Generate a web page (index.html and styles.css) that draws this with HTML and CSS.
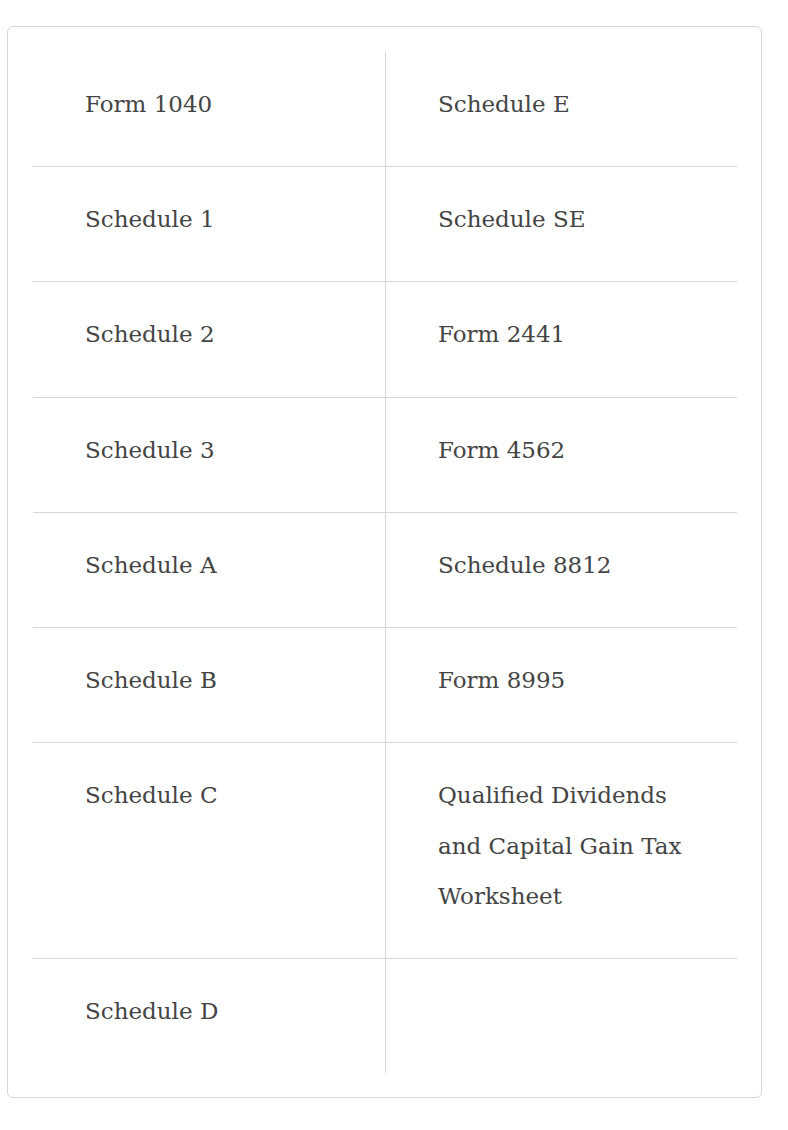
FILE: index.html
```html
<!DOCTYPE html>
<html>
<head>
<meta charset="utf-8">
<link rel="stylesheet" href="styles.css">
</head>
<body>
<div class="card">
  <div class="grid">
    <div class="cell left">Form 1040</div>
    <div class="cell">Schedule E</div>
    <div class="cell left">Schedule 1</div>
    <div class="cell">Schedule SE</div>
    <div class="cell left">Schedule 2</div>
    <div class="cell">Form 2441</div>
    <div class="cell left">Schedule 3</div>
    <div class="cell">Form 4562</div>
    <div class="cell left">Schedule A</div>
    <div class="cell">Schedule 8812</div>
    <div class="cell left">Schedule B</div>
    <div class="cell">Form 8995</div>
    <div class="cell left">Schedule C</div>
    <div class="cell">Qualified Dividends and Capital Gain Tax Worksheet</div>
    <div class="cell left last">Schedule D</div>
    <div class="cell last"></div>
  </div>
</div>
</body>
</html>
```

FILE: styles.css
```css
html, body {
  margin: 0;
  padding: 0;
  background: #ffffff;
}
body {
  padding: 26px 26px 0 7px;
  font-family: "DejaVu Serif", "Liberation Serif", serif;
  color: #444444;
}
.card {
  width: 755px;
  box-sizing: border-box;
  border: 1px solid #d6d6d6;
  border-radius: 6px;
  padding: 25px 25px 24px 25px;
}
.grid {
  display: grid;
  grid-template-columns: 353px 351px;
}
.cell {
  padding: 27px 39px 36.8px 52px;
  font-size: 23px;
  line-height: 50.4px;
  min-height: 50.4px;
  border-bottom: 1px solid #d6d6d6;
}
.cell.left {
  border-right: 1px solid #d6d6d6;
  padding-left: 52px;
}
.cell.last {
  border-bottom: none;
}
```
